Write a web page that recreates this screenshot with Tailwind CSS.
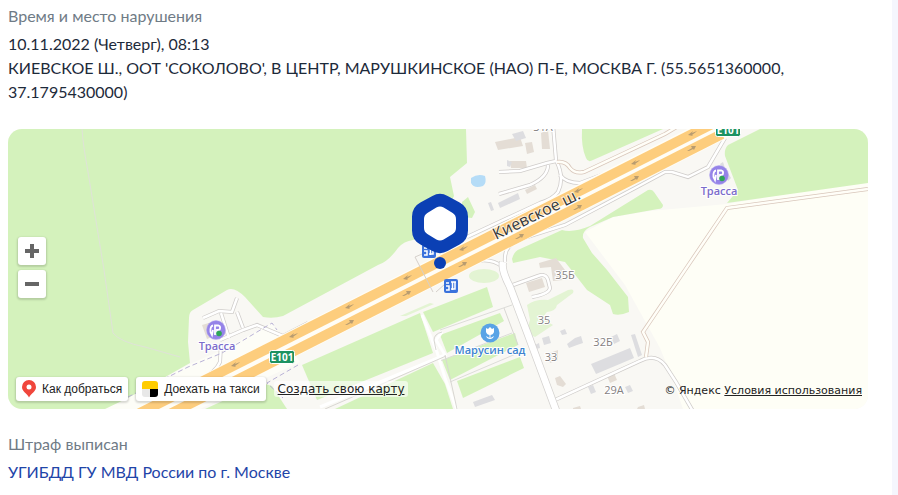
<!DOCTYPE html>
<html lang="ru">

<head>
  <meta charset="UTF-8">
  <meta name="viewport" content="width=device-width, initial-scale=1.0">
  <title>Штраф</title>
  <script src="https://cdn.jsdelivr.net/npm/@tailwindcss/browser@4"></script>
</head>

<body class="min-h-screen flex bg-[#f5f6fd] pr-1.5 font-['Lato',sans-serif] text-base text-[#1d2a3a]">
  <main class="flex-1 min-w-0 bg-white pl-2 pr-6 pt-1 pb-2">
    <section>
      <h2 class="text-[#6f7b86]">Время и место нарушения</h2>
      <div class="mt-1">
        <p>10.11.2022 (Четверг), 08:13</p>
        <p>КИЕВСКОЕ Ш., ООТ 'СОКОЛОВО', В ЦЕНТР, МАРУШКИНСКОЕ (НАО) П-Е, МОСКВА Г. (55.5651360000, 37.1795430000)</p>
      </div>
    </section>

    <div class="relative mt-[25px] mb-[23px] h-[280px] rounded-[14px] overflow-hidden">
      <svg class="block w-full h-full" viewBox="8 129 860 280" preserveAspectRatio="xMidYMid slice" role="img" aria-label="Карта">
        <defs>
          <g id="lanes">
            <path d="M553 125L556 160Q565 178 558 192Q553 199 540 203L467 237" />
            <path d="M499 172L520 171L547 163L556 161" />
            <path d="M499 194L530 185Q548 177 548 165" />
            <path d="M560 175Q566 183 580 183L604 174" />
            <path d="M473 262Q490 257 503 267" />
            <path d="M505 262Q504 249 512 244L527 237L565 225L637 187L665 172L672 172L688 177L708 167L725 138" />
            <path d="M513 285L538 276Q546 273 548 280L550 288Q549 294 532 297" />
            <path d="M555 400L640 361Q655 353 665 365L676 382L694 413" />
            <path d="M203 318L219 311L232 312L237 298" />
            <path d="M221 313L229 338M237 312L243 328" />
            <path d="M220 340L243 330L257 325L283 336L308 323" />
            <path d="M221 343L220 362Q216 372 200 380" />
          </g>
          <g id="tracks">
            <path d="M557 162Q566 161 570 168Q575 174 584 172L665 134L680 125" />
            <path d="M868 189L727 208L685 270L643 332L648 342L646 357" />
          </g>
          <path id="street" d="M503 262Q501 270 510 287L527 332L557 413" />
          <g id="e101">
            <rect x="-12.5" y="-6.500" width="25" height="13" rx="2" fill="#1d9261" stroke="#fff" />
            <text y="4" text-anchor="middle" font-size="10" font-weight="700" fill="#fff">E101</text>
          </g>
          <path id="arrow" d="M-5 3L0 0L-1 -2L4 -2L2 2L1 1L-3 3Z" fill="#b89c70" />
          <path id="arrow-back" d="M5 -3L0 -1L1 -3L-4 1L1 2L0 1L4 -2Z" fill="#b89c70" />
          <g id="fuel">
            <circle r="9.500" fill="#9583e8" stroke="#b9adf0" stroke-width="0.500" />
            <path d="M-1 5V-4.500H2.500Q4.500 -4 4 -1.500Q4 0 1 0V5M-3 -4.500Q-6 -4 -5.500 2L-4 5L-3 0" fill="none" stroke="#fff" stroke-width="1.800" />
            <circle cx="3" cy="3.500" r="2.800" fill="#2fa558" />
          </g>
          <g id="stop">
            <rect x="-7" y="-7" width="14" height="14" rx="2" fill="#3a72dc" />
            <path d="M-5 -3H-2M-5 0H-2V4H-5M0 -4H5M1.500 -4V4M4 -4V3H0" fill="none" stroke="#fff" stroke-width="1.500" />
          </g>
        </defs>

        <!-- land -->
        <rect x="8" y="129" width="860" height="280" fill="#f9f8f4" />
        <path d="M585 232L613 217L650 211L727 204L868 180V409H683L673 380L660 348L640 312L625 285Z" fill="#fefef6" />
        <path d="M105 409L190 364L222 350L272 323L300 362L200 409Z" fill="#fdfdf7" />

        <!-- forest and fields -->
        <g fill="#d4f2bc">
          <path d="M8 129H466L467 163L450 177L454 196L440 225L413 240Q404 241 398 248Q388 262 378 265L283 316Q273 319 263 317L245 297Q234 286 227 290L193 310Q189 312 189 318L188 342L190 363L128 398L105 409H8Z" />
          <path d="M462 202L468 197L475 212L472 218L462 217Z" />
          <path d="M582 129H663L593 160Q588 163 586 158Q581 147 582 129Z" />
          <path d="M760 129H868V183L727 203L738 190L725 156Q724 149 728 145Z" />
          <path d="M512 259Q514 251 520 249L562 230Q573 233 590 226L648 190Q652 189 654 192L663 205Q663 209 658 209L613 217L590 227Q582 231 583 238L592 253L607 270L628 297L629 312Q620 316 613 314L610 305L587 290L573 272L565 262L540 257L513 263Z" />
          <path d="M302 365L420 313L433 353L317 400Z" />
          <path d="M335 409L433 363L445 384L453 409Z" />
          <path d="M423 312L487 287L493 307L433 332Z" />
          <path d="M440 335L500 313L504 321L447 353Z" />
          <path d="M442 360L515 333L518 345L450 380Z" />
          <path d="M457 381L520 357L524 368L463 398Z" />
          <path d="M205 409L262 383L272 386L287 409Z" />
        </g>
        <g fill="#e3f4d3">
          <ellipse cx="484" cy="276" rx="15" ry="7" />
          <path d="M400 316L430 303L434 304L406 316Z" />
          <path d="M527 305Q535 299 548 300L568 290Q575 288 573 293L557 305Q556 311 547 312Q540 318 553 325L535 337Q525 334 530 320Z" />
        </g>
        <path d="M471 178Q478 173 485 176Q487 183 483 186Q474 189 471 183Z" fill="#b5dcf7" />

        <!-- footpaths -->
        <g fill="none" stroke="#dfe2d8">
          <path d="M82 129Q83 145 88 172L104 270L113 333Q120 342 145 347L180 357" />
          <path d="M440 330L512 305M440 361L512 333M450 382L518 353" stroke="#dcdcd8" />
        </g>
        <g fill="none" stroke="#fff" stroke-width="3">
          <path d="M422 315L437 352L445 378L457 410" />
          <path d="M320 407L445 355L436 340L442 332" />
        </g>
        <g fill="none" stroke="#d8d6d2">
          <path d="M325 409L446 356M436 350L434 340Q434 334 442 332M445 355L457 409M504 308L518 345" />
        </g>

        <!-- buildings -->
        <g fill="#e4ddd5">
          <path d="M495 142L520 137L523 146L498 150Z" />
          <path d="M525 143L532 142L534 152L527 154Z" />
          <path d="M541 133L548 130L550 149L542 149Z" />
          <path d="M510 161L526 161L527 168L511 168Z" />
          <path d="M525 190L535 185L537 189L527 194Z" />
          <path d="M526 283L542 278L545 287L529 292Z" />
          <path d="M539 263L556 258L565 270L563 280L553 281L551 267L540 268Z" />
          <path d="M202 325L212 322L217 335L207 339Z" />
          <path d="M555 378L560 376L566 384L563 387L557 385Z" />
          <path d="M607 376L614 373L617 380L610 383Z" />
          <path d="M547 354L558 350L558 360L550 363Z" />
          <path d="M573 408L580 406L581 409H573ZM638 407L644 405L645 409H637Z" />
        </g>
        <g fill="#dddde0">
          <path d="M512 134L523 131L526 138L516 141Z" />
          <path d="M507 160L512 162L510 167L507 166Z" />
          <path d="M498 203L518 193L520 199L500 208Z" />
          <path d="M488 203L491 202L494 210L491 211Z" />
          <path d="M591 364L630 348L634 358L596 374Z" />
          <path d="M631 335L635 334L642 355L638 357Z" />
          <path d="M473 402L492 395L495 400L475 407Z" />
          <path d="M542 338L549 336L551 343L544 345Z" />
          <path d="M560 331L565 329L567 334L562 335Z" />
          <path d="M575 338L581 336L583 343L577 345L569 348L567 344Z" />
          <path d="M611 337L617 334L620 341L614 344Z" />
          <path d="M588 387L593 385L596 392L591 394Z" />
          <path d="M625 387L630 385L633 391L628 393Z" />
          <path d="M535 345L539 343L540 348L536 349Z" />
          <path d="M720 164L723 162L725 168L731 178L728 181Z" />
        </g>

        <!-- minor roads: edge first, then the surface -->
        <use href="#lanes" fill="none" stroke="#cfccca" stroke-width="4" />
        <use href="#lanes" fill="none" stroke="#fff" stroke-width="2.500" />
        <use href="#tracks" fill="none" stroke="#d8c6ba" stroke-width="4" />
        <use href="#tracks" fill="none" stroke="#fffef8" stroke-width="2.500" />
        <use href="#street" fill="none" stroke="#d4d2d0" stroke-width="8" />
        <use href="#street" fill="none" stroke="#fff" stroke-width="6.500" />
        <path d="M128 397L188 367L222 353L272 323L277 330M298 365L267 383L283 398" fill="none" stroke="#b9b2d6" stroke-dasharray="5 3" />

        <!-- highway -->
        <path d="M145 418.500L735 119.500" stroke="#fffdf6" stroke-width="26" />
        <g stroke="#fdcd7d" stroke-width="10">
          <path d="M130 418L720 120" />
          <path d="M160 419L722 134" />
        </g>
        <use href="#arrow-back" x="235" y="365" />
        <use href="#arrow-back" x="293" y="336" />
        <use href="#arrow-back" x="349" y="307" />
        <use href="#arrow-back" x="407" y="278" />
        <use href="#arrow-back" x="463" y="249" />
        <use href="#arrow-back" x="578" y="191" />
        <use href="#arrow-back" x="635" y="163" />
        <use href="#arrow-back" x="692" y="134" />
        <use href="#arrow" x="350" y="322" />
        <use href="#arrow" x="407" y="293" />
        <use href="#arrow" x="463" y="264" />
        <use href="#arrow" x="520" y="236" />
        <use href="#arrow" x="578" y="207" />
        <use href="#arrow" x="635" y="178" />
        <use href="#arrow" x="692" y="148" />
        <path d="M445 284L436 292M433 292L415 257L422 254" fill="none" stroke="#d6d0cb" />

        <!-- labels -->
        <g class="font-['Open_Sans',sans-serif]">
          <g font-size="11" fill="#85817f" stroke="#fff" stroke-width="2" paint-order="stroke" text-anchor="middle">
            <text x="543" y="131">31А</text>
            <text x="565" y="279">35Б</text>
            <text x="544" y="324">35</text>
            <text x="551" y="361">33</text>
            <text x="603" y="346">32Б</text>
            <text x="614" y="394">29А</text>
          </g>
          <text transform="translate(496 240) rotate(-26)" font-size="16" fill="#33373c" stroke="#fff" stroke-opacity="0.700" stroke-width="2" paint-order="stroke">Киевское ш.</text>
          <g font-size="11" font-weight="600" stroke="#fff" stroke-width="2" paint-order="stroke" text-anchor="middle">
            <text x="719" y="195" fill="#7c6ccb">Трасса</text>
            <text x="217" y="350" fill="#7c6ccb">Трасса</text>
            <text x="490" y="354" fill="#3d84d0">Марусин сад</text>
          </g>
          <use href="#e101" x="728" y="130" />
          <use href="#e101" x="282" y="357" />
        </g>
        <use href="#fuel" x="719" y="175" />
        <use href="#fuel" x="216" y="330" />
        <circle cx="490" cy="333" r="9.500" fill="#58a3e6" />
        <path d="M486 328L488 329L490 327L492 329L494 328V332Q493 335 490 335Q487 335 486 332ZM489.500 335H490.500V338L494 336Q493 339 490 339Q487 339 486 336L489.500 338Z" fill="#fff" />
        <use href="#stop" x="429" y="251" />
        <use href="#stop" x="451" y="286" />

        <!-- violation pin -->
        <path d="M440 210L452 216.500V230.500L440 237L428 230.500V216.500Z" fill="#0b40b4" stroke="#0b40b4" stroke-width="32" stroke-linejoin="round" />
        <path d="M440 213.500L449 219V228L440 233.500L431 228V219Z" fill="#fff" stroke="#fff" stroke-width="14" stroke-linejoin="round" />
        <circle cx="440" cy="263" r="6" fill="#0b40b4" />
      </svg>

      <div class="absolute left-2.5 top-[108px] flex flex-col gap-[5px]">
        <button type="button" aria-label="Приблизить" class="size-7 flex items-center justify-center rounded-[3px] bg-white text-[#666] shadow-[0_1px_2px_1px_rgba(0,0,0,0.15)]">
          <svg class="size-3.5" viewBox="0 0 14 14" fill="currentColor"><path d="M5 0H9V5H14V9H9V14H5V9H0V5H5Z" /></svg>
        </button>
        <button type="button" aria-label="Отдалить" class="size-7 flex items-center justify-center rounded-[3px] bg-white text-[#666] shadow-[0_1px_2px_1px_rgba(0,0,0,0.15)]">
          <svg class="size-3.5" viewBox="0 0 14 14" fill="currentColor"><path d="M0 5H14V9H0Z" /></svg>
        </button>
      </div>

      <div class="absolute left-2 right-1.5 bottom-2 flex items-center gap-2 text-xs text-[#222]">
        <button type="button" class="h-6 flex items-center gap-1.5 px-1.5 rounded-[3px] bg-white font-['Liberation_Sans',Arial,sans-serif] whitespace-nowrap shadow-[0_1px_2px_1px_rgba(0,0,0,0.15)]">
          <svg class="w-3.5 h-[18px]" viewBox="0 0 14 18"><path d="M7 0A7 7 0 0 1 14 7C14 12 9 13 7 17.500C5 13 0 12 0 7A7 7 0 0 1 7 0Z" fill="#f0463c" /><circle cx="7" cy="7" r="2.500" fill="#fff" /></svg>
          Как добраться
        </button>
        <button type="button" class="h-6 flex items-center gap-1.5 px-1.5 rounded-[3px] bg-white font-['Liberation_Sans',Arial,sans-serif] whitespace-nowrap shadow-[0_1px_2px_1px_rgba(0,0,0,0.15)]">
          <svg class="size-4" viewBox="0 0 16 16"><path d="M0 8V3Q0 0 3 0H13Q16 0 16 3V8Z" fill="#fc0" /><path d="M0 8H8V16H3Q0 16 0 13Z" fill="#e8e8e8" /><path d="M8 8H16V13Q16 16 13 16H8Z" fill="#000" /></svg>
          Доехать на такси
        </button>
        <a href="#" class="px-1 rounded-[3px] bg-white/60 font-['DejaVu_Sans',Verdana,sans-serif] underline whitespace-nowrap">Создать свою карту</a>
        <p class="ml-auto -mb-1 font-['DejaVu_Sans',Verdana,sans-serif] text-[11px] whitespace-nowrap">© Яндекс <a href="#" class="underline">Условия использования</a></p>
      </div>
    </div>

    <section>
      <h2 class="text-[#6f7b86]">Штраф выписан</h2>
      <p class="mt-1"><a href="#" class="text-[#1f45a8]">УГИБДД ГУ МВД России по г. Москве</a></p>
    </section>
  </main>
</body>

</html>
